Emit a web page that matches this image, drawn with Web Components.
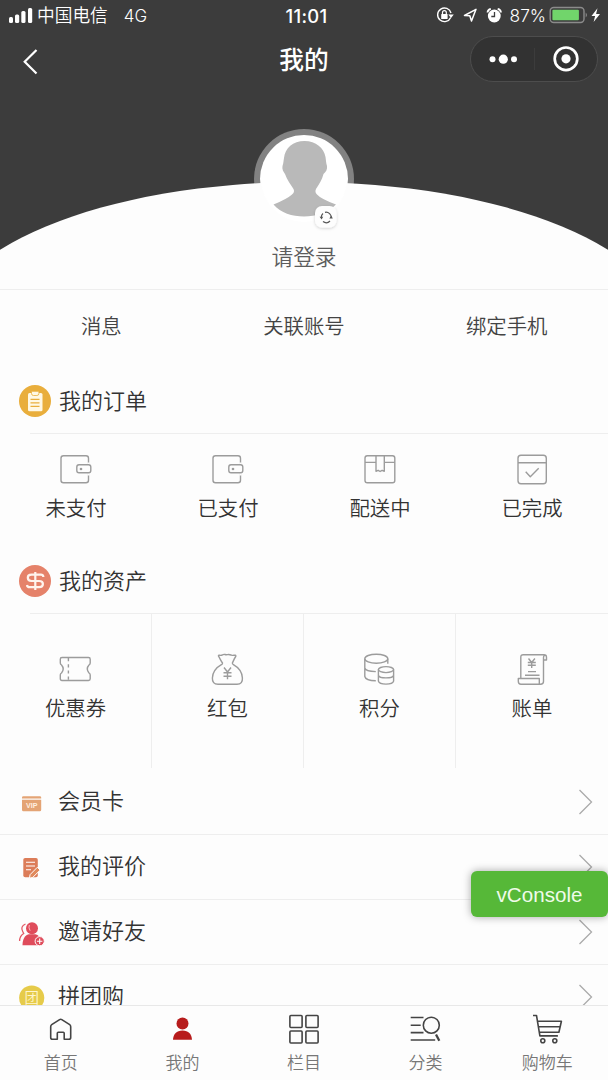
<!DOCTYPE html>
<html lang="zh-CN">
<head>
<meta charset="utf-8">
<title>我的</title>
<style>
body{margin:0;background:#fdfdfd;font-family:"Noto Sans CJK SC",sans-serif;font-weight:350;color:#333}
</style>
</head>
<body>
<profile-page></profile-page>
<script>
const ICONS = {
  wallet:'<rect x="2" y="3.8" width="27.5" height="27" rx="2.5"/><path d="M29.5 10.500v13" stroke="#fdfdfd" stroke-width="2.400"/><rect x="17.8" y="12.800" width="14" height="8" rx="2.2" fill="#fdfdfd"/><circle cx="22" cy="17" r="1.3" fill="currentColor" stroke="none"/>',
  parcel:'<rect x="2" y="3.8" width="29.8" height="27" rx="2.3"/><path d="M2 10.4h11M21.3 10.4h10.5M13 4v15.3l2.100-1 2 1.200 2-1.200 2.200 1V4"/>',
  done:'<rect x="3" y="3.300" width="28.300" height="28.500" rx="3"/><path d="M3 10.700h28.300M10.700 19.700l4.600 5 8.400-8.400"/>',
  coupon:'<path d="M3 5.500h26.500q1.700 0 1.700 1.700v3.800q0 1.300-1.200 2-3.400 3.700 0 8 1.200.7 1.200 2v3.800q0 1.700-1.700 1.700H3q-1.700 0-1.700-1.700V23q0-1.300 1.200-2 3.400-4.300 0-8-1.200-.700-1.200-2V7.200Q1.300 5.500 3 5.500z"/><path d="M9.400 6v22" stroke-dasharray="3.200 3"/>',
  bag:'<path d="M11.500 11C10 9 9 6.500 7.500 4.200Q7.200 3 8.500 3.200C11 4 11.500 2.400 13 2.400c1 0 1.500.6 3.500.2 2-.5 3 .2 4 .6 1.200.4 2.500 0 3.700 0q1 .3.500 1.300C23.300 6.500 22.500 8.500 21.400 11q-.2 1 1 1.700c5 2.800 8.700 8 9 13.300.3 4-1.500 6.300-5.400 6.300H7C3 32.300 1.200 30 1.400 26c.3-5.300 4-10.500 9-13.300q1.400-.7 1.100-1.700z"/><path d="M13 15.500l3.500 4.500 3.500-4.500M16.500 20v7.200M12.500 20.800h8M12.500 24.200h8"/>',
  coins:'<ellipse cx="13.300" cy="6.700" rx="11.500" ry="4.500"/><path d="M1.800 6.700V24.500c.5 2.300 4.500 4.200 11 4.200M24.800 6.700v5M1.800 16c.5 2.300 4.500 3.400 11 3.600"/><ellipse cx="23" cy="17.600" rx="7.600" ry="3"/><path d="M15.400 17.600v11.500c1 4 14.200 4 15.200 0V17.600M15.400 23.200c1 3.600 14.200 3.600 15.200 0"/>',
  bill:'<path d="M5.800 26V5.200q0-2.500 2.500-2.500h20.700q2.500 0 2.500 2.600V8h-3M31 3.500q-2.500-.5-2.500 2V29.500q0 2.700-3 2.700H6q-2.700 0-2.700-3V26.500h21V32"/><path d="M13.500 6.500l3.200 4 3.200-4M16.700 10.500v5.500M12.800 10.500h8M12.800 13.300h8M13 19.600h8M10 23.200h14.500"/>',
  home:'<path d="M13.300 27.300H8.500q-1.800 0-1.800-1.800V14.700q0-1.300 1-2L15.600 7.600q1.100-.7 2.200 0l7.900 5.100q1 .7 1 2v10.800q0 1.800-1.800 1.800h-4.700v-6q0-1-1-1h-4.900q-1 0-1 1z"/>',
  user:'<g fill="#b71c1c" stroke="none"><circle cx="17.500" cy="11.400" r="6"/><path d="M8 27.800c.3-5.800 3.500-9.300 9.500-9.300s9.200 3.500 9.500 9.300z"/></g>',
  grid:'<rect x="2.900" y="3.500" width="12.200" height="12" rx="1"/><rect x="18.900" y="3.500" width="12.200" height="12" rx="1"/><rect x="2.900" y="19" width="12.200" height="12" rx="1"/><rect x="18.900" y="19" width="12.200" height="12" rx="1"/>',
  category:'<path d="M1.700 5.500h12.800M1.700 13.300h10M1.700 20.600h12.800M1.700 28h24.500"/><circle cx="22.300" cy="13.200" r="8"/><path d="M27 22.500l3.300 6.200" stroke-width="2.300"/>',
  cart:'<path d="M3 3.500h3.500l3.400 20.400h18M7.400 9.300h24l-2.500 11H9.300M8.400 14.800h21.700"/><circle cx="12.800" cy="28.700" r="2"/><circle cx="24.800" cy="28.700" r="2"/>'
};

const BADGES = {
  order:'<circle cx="16" cy="16" r="16" fill="#e9ae3c"/><rect x="9" y="8" width="14.500" height="18.300" rx="1.500" fill="#fff8e4"/><path d="M12.500 6.300h7.400v2.200q0 2-2 2h-3.400q-2 0-2-2z" fill="#fff8e4" stroke="#e9ae3c" stroke-width=".8"/><path d="M11.500 14.300h9M11.500 17.800h9M11.500 21.300h9" stroke="#e9ae3c" stroke-width="1.200"/>',
  asset:'<circle cx="16" cy="16" r="16" fill="#e5826a"/><path d="M24.300 12V11.500Q24 9.700 22 9.700H12.500Q8.800 9.700 8.800 12.800T12.500 16h7.600q3.800 0 3.800 3.100t-3.800 3.100H10.500Q8.300 22.200 8 20M16.300 7v18" fill="none" stroke="#fff4ee" stroke-width="2.200"/>',
  vip:'<path d="M3 8.600q0-1.400 1.400-1.400h16.400q1.400 0 1.400 1.400v.9H3zM3 10.700h19.200v10q0 1.500-1.400 1.500H4.400Q3 22.200 3 20.700z" fill="#e4a475"/><text x="7" y="19" textLength="11.500" lengthAdjust="spacingAndGlyphs" font-family="Liberation Sans" font-size="6.500" font-weight="700" fill="#fff0e0">VIP</text>',
  review:'<rect x="4.300" y="4" width="14.500" height="19.200" rx="1.800" fill="#dc7d59"/><path d="M7 8.300h9M7 12h9M7 15.700h5" stroke="#fff" stroke-width="1.100"/><path d="M10.500 24.200l.5-3.500 7.300-7.400 2.800 2.800-7.300 7.300z" fill="#e08a5c" stroke="#fff" stroke-width="1"/>',
  invite:'<path d="M6.500 5Q1 7.500 3.700 12.500l1 2Q.6 17 .6 22" fill="none" stroke="#e45a66" stroke-width="1.300"/><circle cx="13" cy="9.300" r="6" fill="#df4c5b"/><path d="M3.500 26.300c0-6 2.200-10 6.300-11h6.500c3.200.8 5 3 5.700 6v5z" fill="#df4c5b"/><path d="M10.300 6q-1 2.700.8 5.700" fill="none" stroke="#ffc4c8" stroke-width=".9"/><circle cx="20.700" cy="22.200" r="4.600" fill="#df4c5b" stroke="#fff" stroke-width="1"/><path d="M18 22.200h5.400M20.700 19.500v5.400" stroke="#fff" stroke-width="1.100"/>',
  group:'<circle cx="12.700" cy="14" r="12.600" fill="#e6cb4a"/><text x="12.700" y="19.300" text-anchor="middle" font-family="Noto Sans CJK SC" font-size="14.500" fill="#fff6cc">团</text>'
};

function define(name, css, html){
  customElements.define(name, class extends HTMLElement{
    constructor(){
      super();
      this.attachShadow({mode:'open'}).innerHTML =
        `<style>:host{display:block;box-sizing:border-box}${css}</style>` +
        (typeof html === 'function' ? html(this) : html);
    }
  });
}

define('line-icon',
  ':host{width:34px;height:34px}svg{display:block;overflow:visible}',
  el => `<svg width="34" height="34" fill="none" stroke="currentColor" stroke-width="${el.getAttribute('weight')||1.4}" stroke-linejoin="round">${ICONS[el.getAttribute('name')]}</svg>`);

define('color-badge',
  ':host{width:var(--size,26px);height:var(--size,26px)}svg{display:block;overflow:visible;width:100%;height:100%}',
  el => `<svg>${BADGES[el.getAttribute('name')]}</svg>`);

define('status-bar', `
  :host{display:grid;grid-template-columns:1fr auto 1fr;height:32px;align-items:center;color:#fff;font-size:17.7px;line-height:32px;font-family:Inter,"Noto Sans CJK SC",sans-serif}
  div{display:flex;align-items:center}
  .l{padding-left:8px}.l svg{margin-right:4px}.l span+span{margin-left:16px;font-size:17px}
  .t{font-weight:500;font-size:18.400px;letter-spacing:.3px;padding-left:5px}
  .r{justify-content:flex-end;padding-right:6px}.r span{font-size:17.300px;margin:0 4px 0 8px}
  span,.t{margin-top:-1px}.r svg{margin-top:-2px}.r span{margin-top:-1px}
`, `
  <div class="l"><svg width="25" height="18" fill="#fff"><rect x="1" y="10" width="4" height="6" rx="1.500"/><rect x="7" y="7.500" width="4.200" height="8.500" rx="1.500"/><rect x="13.300" y="4" width="4.200" height="12" rx="1.500"/><rect x="20" y="1" width="4.200" height="15" rx="1.500"/></svg><span>中国电信</span><span>4G</span></div>
  <div class="t">11:01</div>
  <div class="r">
    <svg style="width:70px" height="18" fill="none" stroke="#fff">
      <g transform="translate(4)"><path d="M14.700 11.500A6.800 6.800 0 1 1 15 7" stroke-width="1.400"/><path d="M12.300 8.500h5.500L15 12z" fill="#fff" stroke="none"/><rect x="5.200" y="8" width="6.400" height="5" rx=".6" fill="#fff" stroke="none"/><path d="M6.500 8V6.500a1.900 1.900 0 0 1 3.800 0V8" stroke-width="1.200"/>
      <path d="M28.500 9.500L40 3.300 35.500 15l-1.700-5.300z" stroke-width="1.500" stroke-linejoin="round"/>
      <circle cx="58.300" cy="10" r="6.400" fill="#fff" stroke="none"/><path d="M51.500 6.500q.3-3 3.300-3.700M65 6.500q-.3-3-3.300-3.700" stroke-width="1.800"/><path d="M58.500 6v4.500h-3.200" stroke="#3c3c3c" stroke-width="1.300"/></g>
    </svg>
    <span>87%</span>
    <svg width="52" height="18" style="overflow:visible"><rect x=".2" y="1.500" width="33.800" height="15" rx="3.500" fill="none" stroke="#8b8b8b" stroke-width="1.400"/><rect x="2.400" y="3.700" width="26.500" height="10.600" rx="1" fill="#71d56b"/><path d="M35.700 6.500q2.500 2.500 0 5z" fill="#8b8b8b"/><path d="M47.500 2.200L41.500 10h3.600l-1.500 6 6.400-8h-3.900z" fill="#fff"/></svg>
  </div>`);

define('nav-bar', `
  :host{display:grid;grid-template-columns:1fr auto 1fr;align-items:center;height:54px;padding:0 10px 0 10px;color:#fff}
  h1{margin:-2px 0 0;font-size:24.700px;font-weight:500;line-height:36px}
  .back{display:block;margin:4px 0 0 10px}
  .cap{justify-self:end;display:flex;box-sizing:border-box;width:128px;height:46px;margin-top:-1px;border:1px solid #4d4d4d;border-radius:23px;background:#323232}
`, `
  <svg class="back" width="20" height="28" fill="none" stroke="#fff" stroke-width="2.200"><path d="M16.500 3L4.700 14.700 16.500 26.500"/></svg>
  <h1>我的</h1>
  <div class="cap"><svg width="126" height="44"><g fill="#fff"><circle cx="21.500" cy="22.200" r="3"/><circle cx="32.300" cy="22.200" r="4.600"/><circle cx="43" cy="22.200" r="3"/><circle cx="95" cy="21.800" r="4.600"/></g><circle cx="95" cy="21.800" r="11.300" fill="none" stroke="#fff" stroke-width="2.700"/><path d="M63.500 11v22" stroke="#3c3c3c"/></svg></div>`);

define('profile-hero', `
  :host{display:grid;height:290px;border-bottom:1px solid #eee;background:#3c3c3c;grid-template:1fr/1fr;overflow:hidden}
  svg,.over{grid-area:1/1}
  .over{display:flex;flex-direction:column;justify-content:space-between}
  .name{padding-bottom:17px;text-align:center;font-size:21.700px;line-height:32px;color:#5c5c5c}
`, `
  <svg width="608" height="289">
    <defs><filter id="s" x="-30%" y="-30%" width="160%" height="160%"><feDropShadow dx="0" dy="1" stdDeviation="1.500" flood-opacity=".18"/></filter></defs>
    <circle cx="304" cy="179" r="50" fill="#828282"/>
    <circle cx="304" cy="179" r="44" fill="#fff"/>
    <path d="M-61 334A365 152 0 0 1 669 334z" fill="#fdfdfd"/>
    <circle cx="304" cy="179" r="43" fill="#fff"/>
    <path d="M304.500 141C293 141 285 148 284 158C283.500 161 283.500 163 282.500 166C281.800 169 283.500 172 285 174C287 180 291 185 293.500 189Q295 192 292 194.500Q287 199 273.500 204.500C281 213 292 216.500 304 216.500C316 216.500 327 213 336 204.500Q321 199 317 194.500Q314.500 192 316 189C319 184 322 180 323.500 174C326 172 327.500 169 327 166C326 163 326 160 325.500 157C324 148 316 141 304.500 141z" fill="#b9b9b9"/>
    <rect x="315" y="206" width="21.500" height="21.500" rx="7" fill="#fdfdfd" filter="url(#s)"/>
    <g fill="none" stroke="#555" stroke-width="1.200"><path d="M321.300 217.500A5.200 5.200 0 0 1 323 213.500M325 212.300A5.300 5.300 0 0 1 331.300 218M330 221A5.300 5.300 0 0 1 323 221.500"/></g>
    <path d="M319.600 216.700h3.600l-1.600 2.900zM329.300 218.500h3.500l-1.500-3z" fill="#555"/>
  </svg>
  <div class="over"><div><status-bar></status-bar><nav-bar></nav-bar></div><div class="name">请登录</div></div>`);

define('quick-links', `
  :host{display:grid;grid-template-columns:repeat(3,1fr);height:76px;padding-top:20px;text-align:center;font-size:20.400px;line-height:30px;color:#444}
`, '<slot></slot>');

define('menu-section', `
  header{display:flex;align-items:center;gap:8px;height:67px;padding:2px 0 0 19px;box-sizing:border-box;font-size:22px;line-height:32px}
  header color-badge{--size:32px}
  .label{padding-bottom:4px}
  .rule{height:1px;margin-left:30px;background:#eee}
  .cells{display:grid;grid-template-columns:repeat(4,152px);height:var(--cells-height)}
`, el => `<header><color-badge name="${el.getAttribute('icon')}"></color-badge><span class="label">${el.getAttribute('label')}</span></header><div class="rule"></div><div class="cells"><slot></slot></div>`);

define('menu-cell', `
  :host{display:flex;flex-direction:column;align-items:center;padding-top:var(--cell-top);border-right:var(--cell-rule,0 solid);font-size:20.400px;line-height:30px}
  line-icon{color:#9c9c9c;margin-bottom:6px}
  :host(:last-child){border-right:0}
`, el => `<line-icon name="${el.getAttribute('icon')}"></line-icon><slot></slot>`);

define('list-row', `
  :host{display:flex;align-items:center;height:65px;padding:0 14px 0 19px;border-bottom:1px solid #eee;font-size:22px;line-height:32px}
  color-badge{margin-right:13px}
  .text{flex:1;padding-bottom:6px}
`, el => `<color-badge name="${el.getAttribute('icon')}"></color-badge><span class="text"><slot></slot></span><svg width="16" height="28" fill="none" stroke="#aaa" stroke-width="1.300"><path d="M1.500 2L13.500 14 1.500 26"/></svg>`);

define('debug-button', `
  :host{position:absolute;left:471px;top:871px;width:137px;height:46px;border-radius:6px;background:#56b838;box-shadow:0 0 9px rgba(0,0,0,.35);color:#effbe9;text-align:center;font:20.600px/48px "Liberation Sans",sans-serif}
`, '<slot></slot>');

define('tab-item', `
  :host{display:flex;flex-direction:column;align-items:center;padding-top:6px;font-size:17px;line-height:24px;color:#777}
  line-icon{color:#444;margin-bottom:4px}
`, el => `<line-icon weight="1.600" name="${el.getAttribute('icon')}"></line-icon><slot></slot>`);

define('tab-bar', `
  :host{display:grid;grid-template-columns:repeat(5,1fr);height:75px;flex:none;border-top:1px solid #e8e8e8;background:#fdfdfd}
`, '<slot></slot>');

define('profile-page', `
  :host{position:relative;display:flex;flex-direction:column;width:608px;height:1080px;overflow:hidden}
  main{flex:1;min-height:0;overflow:hidden}
  .orders{--cells-height:112px;--cell-top:18px}
  .assets{--cells-height:154px;--cell-top:38px;--cell-rule:1px solid #eee;margin-bottom:2px}
`, `
  <main>
    <profile-hero></profile-hero>
    <quick-links><span>消息</span><span>关联账号</span><span>绑定手机</span></quick-links>
    <menu-section class="orders" icon="order" label="我的订单">
      <menu-cell icon="wallet">未支付</menu-cell><menu-cell icon="wallet">已支付</menu-cell><menu-cell icon="parcel">配送中</menu-cell><menu-cell icon="done">已完成</menu-cell>
    </menu-section>
    <menu-section class="assets" icon="asset" label="我的资产">
      <menu-cell icon="coupon">优惠券</menu-cell><menu-cell icon="bag">红包</menu-cell><menu-cell icon="coins">积分</menu-cell><menu-cell icon="bill">账单</menu-cell>
    </menu-section>
    <list-row icon="vip">会员卡</list-row>
    <list-row icon="review">我的评价</list-row>
    <list-row icon="invite">邀请好友</list-row>
    <list-row icon="group">拼团购</list-row>
  </main>
  <tab-bar>
    <tab-item icon="home">首页</tab-item><tab-item icon="user">我的</tab-item><tab-item icon="grid">栏目</tab-item><tab-item icon="category">分类</tab-item><tab-item icon="cart">购物车</tab-item>
  </tab-bar>
  <debug-button>vConsole</debug-button>`);
</script>
</body>
</html>
